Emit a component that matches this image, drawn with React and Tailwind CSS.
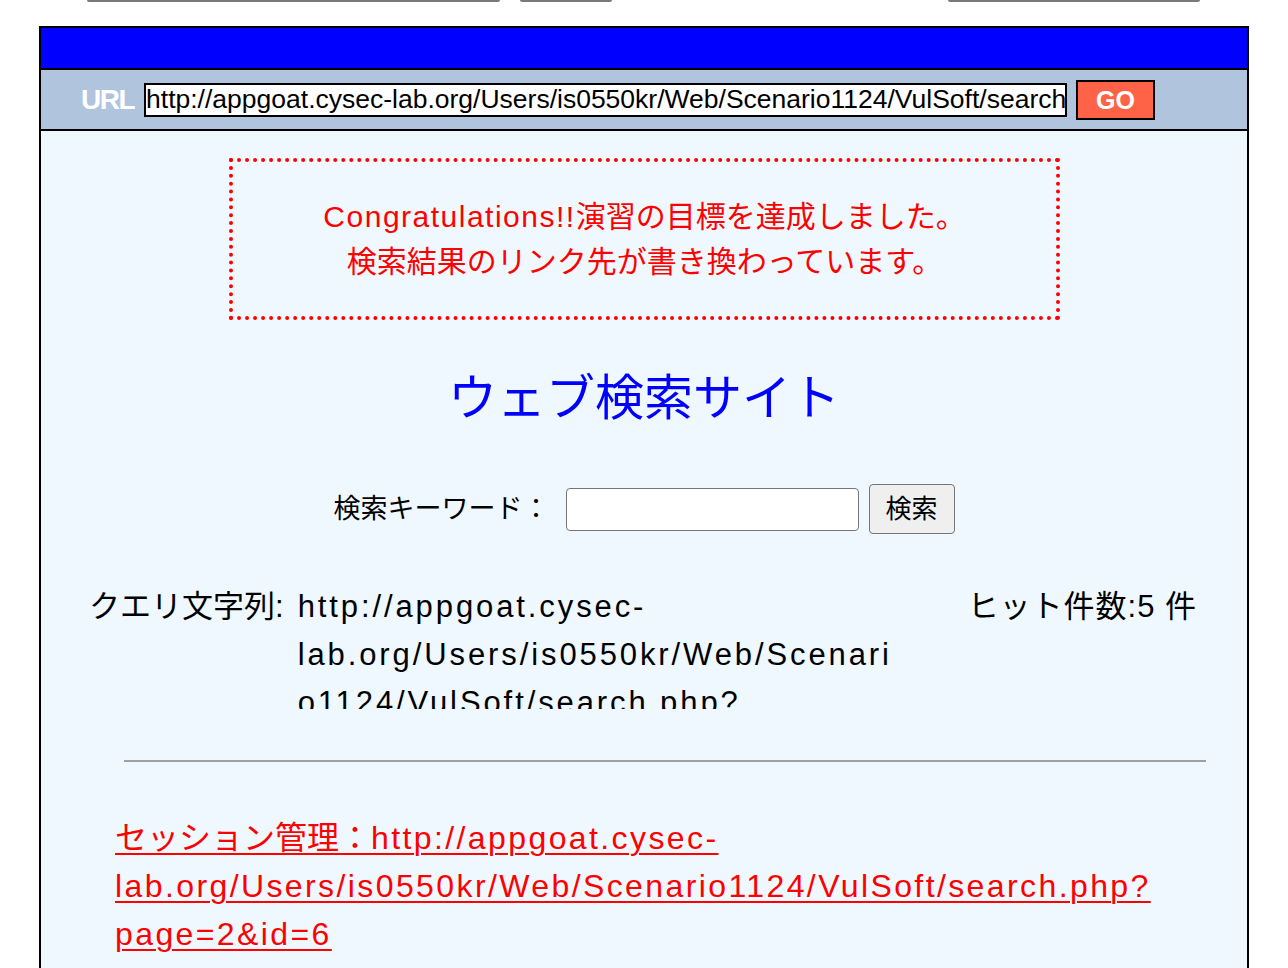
import React from 'react'

// ── Fonts ───────────────────────────────────────────────────────────────────

const JP = { fontFamily: '"Liberation Sans", "Noto Sans CJK JP", sans-serif' }
const SANS = { fontFamily: '"Liberation Sans", sans-serif' }

const QUERY = 'http://appgoat.cysec-lab.org/Users/is0550kr/Web/Scenario1124/VulSoft/search.php?keyword=%3Cscript%3E'
const LINK = 'http://appgoat.cysec-lab.org/Users/is0550kr/Web/Scenario1124/VulSoft/search.php?page=2&id=6'

export default function App() {
  return (
    <div className="min-h-screen bg-white overflow-hidden" style={JP}>
      {/* leftover browser chrome at top */}
      <div className="relative h-[26px]">
        <div className="absolute top-0 left-[87px] w-[413px] h-[2px] bg-[#7a7a7a] rounded-b" />
        <div className="absolute top-0 left-[520px] w-[92px] h-[2px] bg-[#7a7a7a] rounded-b" />
        <div className="absolute top-0 left-[948px] w-[252px] h-[2px] bg-[#7a7a7a] rounded-b" />
      </div>

      <div className="ml-[39px] w-[1210px] border-2 border-black bg-[#f0f8ff]">
        {/* blue header */}
        <div className="h-[42px] bg-[#0000ff] border-b-2 border-black" />

        {/* url bar */}
        <div className="h-[61px] bg-[#b0c4de] border-b-2 border-black flex items-center pl-[40px]">
          <span className="text-white font-semibold text-[28px] tracking-[-1.5px] mr-[10px]" style={SANS}>
            URL
          </span>
          <input
            readOnly
            value={QUERY}
            className="w-[923px] h-[34px] border-2 border-black bg-white px-0 text-[26.5px] text-black leading-none outline-none"
            style={SANS}
          />
          <button
            className="ml-[9px] w-[79px] h-[40px] bg-[#ff6347] border-2 border-black text-white font-bold text-[25px]"
            style={SANS}
          >
            GO
          </button>
        </div>

        {/* content */}
        <div className="pt-[27px] pb-[60px]">
          <div className="ml-[188px] w-[831px] h-[162px] border-[4px] border-dotted border-[#ff0000] flex flex-col items-center justify-center text-[#ff0000] text-[30px] leading-[45px]">
            <p>
              <span className="tracking-[1.5px]">Congratulations!!</span>演習の目標を達成しました。
            </p>
            <p>検索結果のリンク先が書き換わっています。</p>
          </div>

          <h1 className="mt-[43px] text-center text-[#0000ff] text-[49px] leading-[70px]">ウェブ検索サイト</h1>

          <div className="mt-[51px] flex items-center justify-center text-[27px] text-black">
            <span className="mr-[16px]">検索キーワード：</span>
            <input className="w-[293px] h-[43px] border border-[#767676] rounded-[4px] bg-white" />
            <button className="ml-[10px] w-[86px] h-[50px] border border-[#767676] rounded-[4px] bg-[#efefef] text-[26px]">
              検索
            </button>
          </div>

          <div className="mt-[49px] flex text-[31px] leading-[48px] text-black">
            <span className="ml-[48px] whitespace-nowrap">クエリ文字列:</span>
            <div className="ml-[14px] w-[604px] h-[126px] overflow-hidden break-words tracking-[2.9px]">{QUERY}</div>
            <span className="ml-[66px] whitespace-nowrap tracking-[1px]">ヒット件数:5 件</span>
          </div>

          <hr className="mt-[51px] ml-[83px] w-[1082px] border-0 border-t-2 border-[#a0a0a0]" />

          <div className="mt-[52px] ml-[74px] w-[1090px] text-[32px] leading-[48px]">
            <a href="#" className="text-[#ff0000] underline decoration-2 underline-offset-[4px] break-words">
              セッション管理：<span className="tracking-[2.4px]">{LINK}</span>
            </a>
          </div>
        </div>
      </div>
    </div>
  )
}
